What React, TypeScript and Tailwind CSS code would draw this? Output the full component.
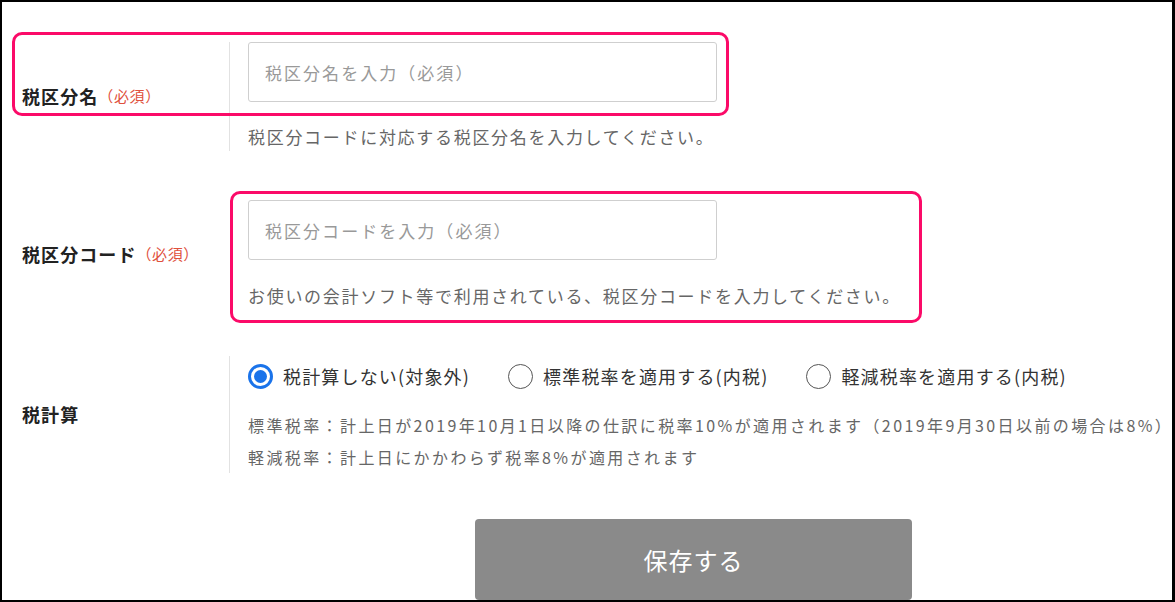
import { useState } from 'react';

const font = { fontFamily: '"Noto Sans CJK JP", "Noto Sans", sans-serif' };

function Radio({ checked, label, onClick }: { checked: boolean; label: string; onClick: () => void }) {
    return (
        <button type="button" onClick={onClick} className="flex items-center gap-[10px]">
            {checked ? (
                <span className="w-[25px] h-[25px] rounded-full border-[3px] border-[#1a73ea] flex items-center justify-center">
                    <span className="w-[13px] h-[13px] rounded-full bg-[#1a73ea]" />
                </span>
            ) : (
                <span className="w-[25px] h-[25px] rounded-full border-[1.5px] border-[#555]" />
            )}
            <span className="text-[18px] tracking-[0.065em] text-[#333] leading-[26px]">{label}</span>
        </button>
    );
}

function Label({ text, required }: { text: string; required?: boolean }) {
    return (
        <div className="flex items-center pl-[20px]">
            <span className="text-[18px] font-bold tracking-[0.06em] text-[#222]">{text}</span>
            {required && <span className="text-[15px] tracking-[0.04em] text-[#e0503c]">（必須）</span>}
        </div>
    );
}

export default function App() {
    const [name, setName] = useState('');
    const [code, setCode] = useState('');
    const [calc, setCalc] = useState(0);

    const options = ['税計算しない(対象外)', '標準税率を適用する(内税)', '軽減税率を適用する(内税)'];

    return (
        <div
            style={font}
            className="relative w-[1175px] h-[602px] overflow-hidden bg-white border-2 border-r-[3px] border-black"
        >
            <div className="pt-[40px]">
                {/* 税区分名 */}
                <div className="grid grid-cols-[227px_1fr]">
                    <Label text="税区分名" required />
                    <div className="border-l border-[#e2e2e2] pl-[18px] pb-[2px]">
                        <input
                            value={name}
                            onChange={(e) => setName(e.target.value)}
                            placeholder="税区分名を入力（必須）"
                            className="block w-[469px] h-[60px] border border-[#cfcfcf] rounded-[3px] px-[16px] text-[17px] tracking-[0.12em] text-[#333] placeholder-[#999] outline-none"
                        />
                        <p className="mt-[23px] text-[17px] leading-[24px] tracking-[0.1em] text-[#666]">
                            税区分コードに対応する税区分名を入力してください。
                        </p>
                    </div>
                </div>

                {/* 税区分コード */}
                <div className="grid grid-cols-[227px_1fr] mt-[49px]">
                    <Label text="税区分コード" required />
                    <div className="pl-[19px] pb-[1px]">
                        <input
                            value={code}
                            onChange={(e) => setCode(e.target.value)}
                            placeholder="税区分コードを入力（必須）"
                            className="block w-[469px] h-[60px] border border-[#cfcfcf] rounded-[3px] px-[16px] text-[17px] tracking-[0.12em] text-[#333] placeholder-[#999] outline-none"
                        />
                        <p className="mt-[24px] text-[17px] leading-[24px] tracking-[0.1em] text-[#666]">
                            お使いの会計ソフト等で利用されている、税区分コードを入力してください。
                        </p>
                    </div>
                </div>

                {/* 税計算 */}
                <div className="grid grid-cols-[227px_1fr] mt-[47px]">
                    <Label text="税計算" />
                    <div className="border-l border-[#e2e2e2] pl-[18px]">
                        <div className="flex items-center h-[40px] gap-[38px]">
                            {options.map((o, i) => (
                                <Radio key={o} label={o} checked={calc === i} onClick={() => setCalc(i)} />
                            ))}
                        </div>
                        <div className="mt-[13px] text-[16px] leading-[32px] tracking-[0.15em] text-[#666] whitespace-nowrap">
                            <p>標準税率：計上日が2019年10月1日以降の仕訳に税率10%が適用されます（2019年9月30日以前の場合は8%）</p>
                            <p>軽減税率：計上日にかかわらず税率8%が適用されます</p>
                        </div>
                    </div>
                </div>

                <button
                    type="button"
                    className="block ml-[473px] mt-[46px] w-[437px] h-[81px] rounded-[4px] bg-[#8a8a8a] text-white text-[24px] tracking-[0.04em]"
                >
                    保存する
                </button>
            </div>

            {/* annotation frames */}
            <div className="absolute left-[10px] top-[30px] w-[717px] h-[84px] border-[3px] border-[#fb0a68] rounded-[10px] pointer-events-none" />
            <div className="absolute left-[228px] top-[189px] w-[692px] h-[132px] border-[3px] border-[#fb0a68] rounded-[10px] pointer-events-none" />
        </div>
    );
}
